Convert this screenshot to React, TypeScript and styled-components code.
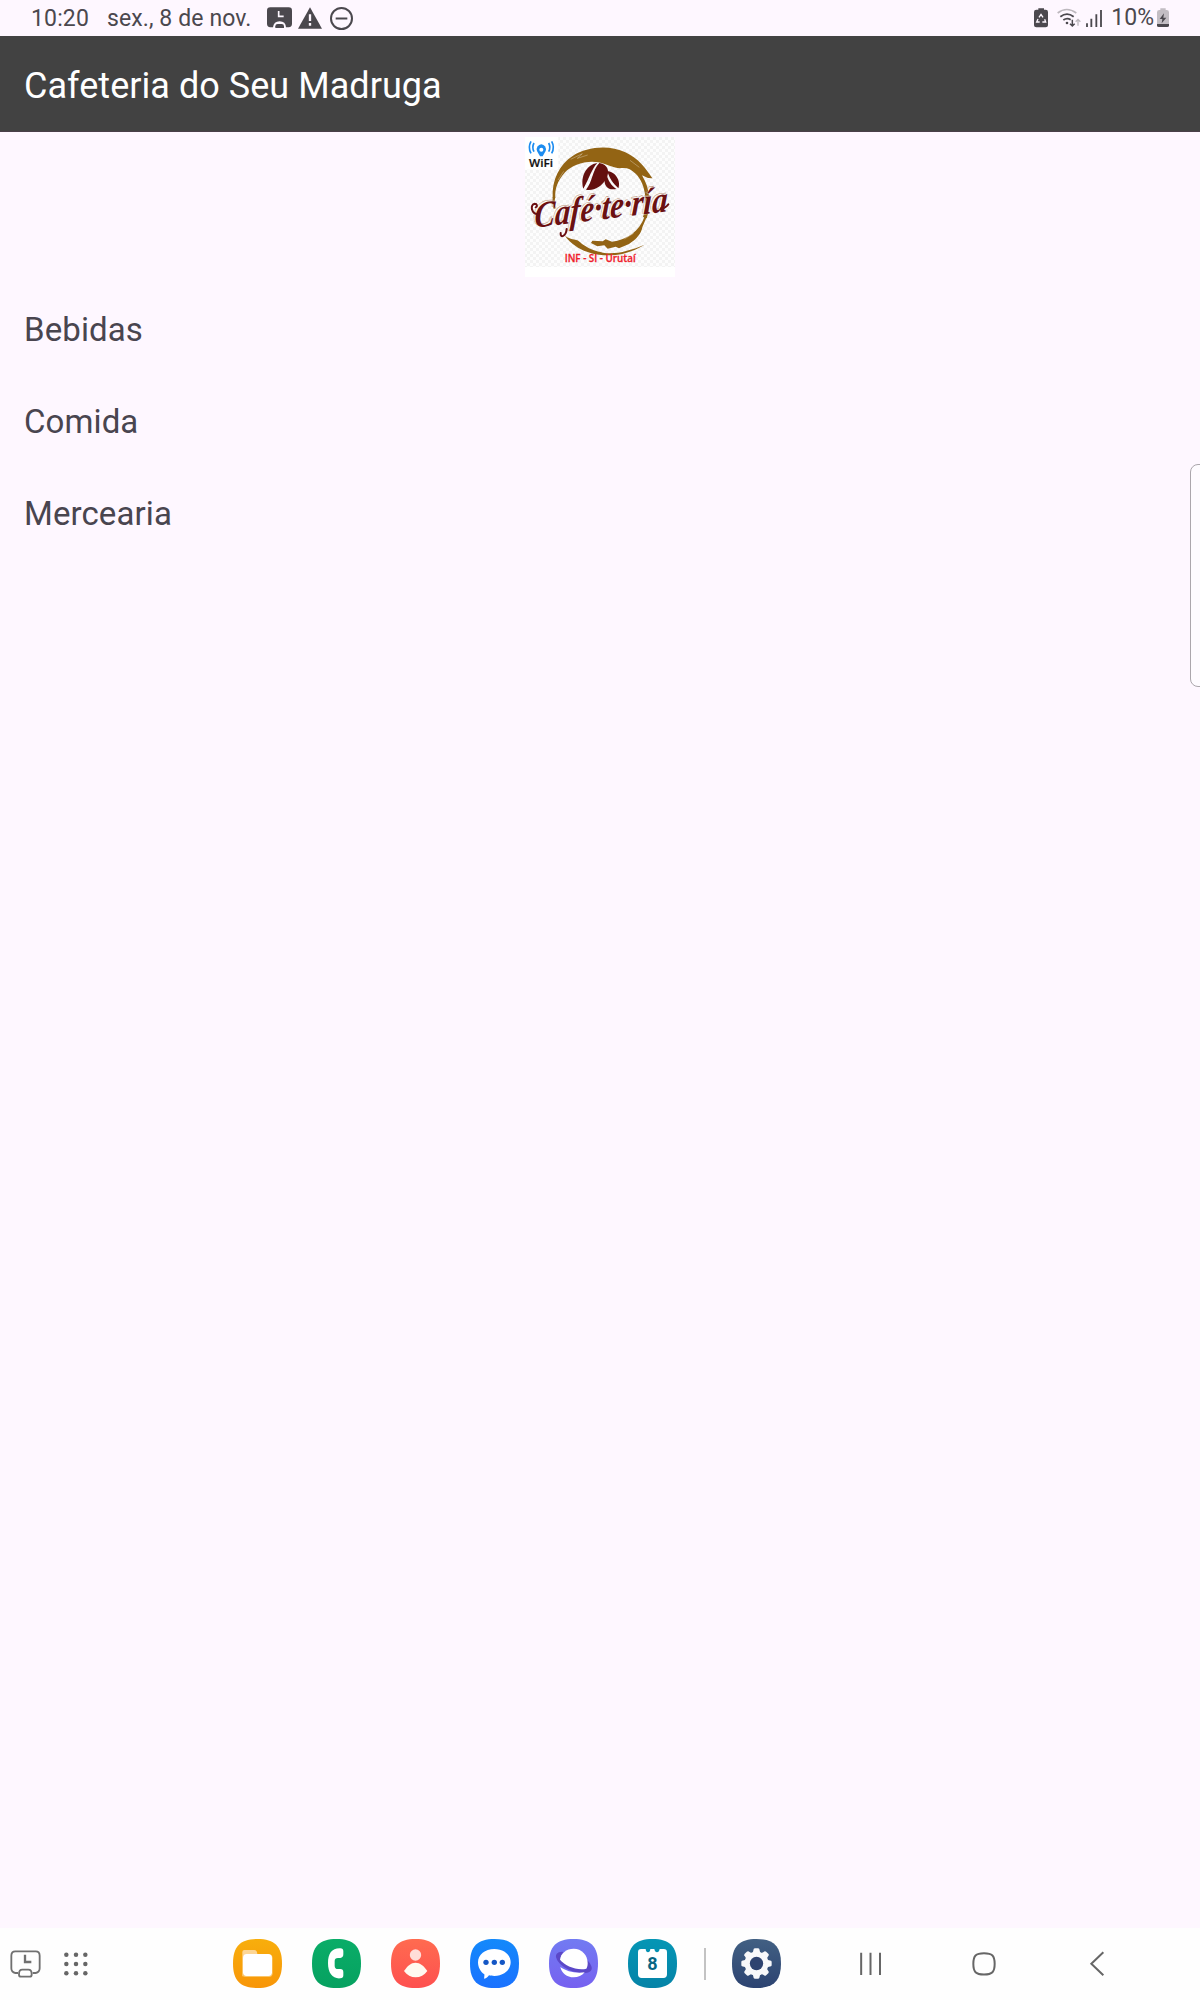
import React from "react";
import styled, { createGlobalStyle } from "styled-components";

const GlobalStyle = createGlobalStyle`
  *, *::before, *::after { box-sizing: border-box; }
  body { margin: 0; background: #fef7ff; }
  svg { display: block; flex: none; overflow: visible; }
`;

const Screen = styled.div`
  position: relative;
  display: flex;
  flex-direction: column;
  width: 1200px;
  height: 2000px;
  overflow: hidden;
  background: #fef7ff;
  font-family: Roboto, "Liberation Sans", sans-serif;
  color: #49454f;
`;

const StatusBar = styled.header`
  display: flex;
  justify-content: space-between;
  height: 36px;
  padding: 0 31px 0 31px;
  color: #4b484e;
`;

const StatusGroup = styled.div`
  display: flex;
  align-items: center;
`;

const StatusText = styled.span<{ $width: number; $spacing?: number }>`
  width: ${(p) => p.$width}px;
  padding-top: 1px;
  font-size: 23px;
  line-height: 36px;
  letter-spacing: ${(p) => p.$spacing ?? 0}px;
  white-space: nowrap;
`;

const Glyph = styled.svg<{ $gap?: number }>`
  margin-left: ${(p) => p.$gap ?? 0}px;
`;

const AppBar = styled.div`
  display: flex;
  align-items: center;
  height: 96px;
  padding: 4px 24px 0;
  background: #424242;
  border-bottom: 1px solid #4a3f49;
`;

const Title = styled.h1`
  margin: 0;
  font-size: 36px;
  font-weight: 400;
  line-height: 48px;
  letter-spacing: 0.04px;
  color: #fff;
`;

const Content = styled.main`
  display: flex;
  flex: 1;
  flex-direction: column;
  padding-top: 5px;
`;

const LogoFrame = styled.div`
  align-self: center;
  width: 150px;
  height: 140px;
  background: #fff;
`;

const Menu = styled.ul`
  display: flex;
  flex-direction: column;
  margin: 6px 0 0;
  padding: 0;
  list-style: none;
`;

const MenuItem = styled.li`
  display: flex;
  align-items: center;
  height: 92px;
  padding: 0 24px;
  font-size: 33px;
  letter-spacing: 0.1px;
`;

const EdgeHandle = styled.div`
  position: absolute;
  top: 464px;
  right: -2px;
  width: 12px;
  height: 223px;
  border: 1.5px solid #aba6ac;
  border-radius: 8px 0 0 8px;
  background: #fefbff;
`;

const Dock = styled.footer`
  display: flex;
  align-items: center;
  height: 72px;
  padding: 0 0 1px 10px;
  background: #fefefe;
`;

const Tools = styled.div`
  display: flex;
  align-items: center;
  gap: 23px;
  width: 223px;
`;

const Apps = styled.div`
  display: flex;
  align-items: center;
  gap: 30px;
`;

const Divider = styled.span`
  width: 2px;
  height: 32px;
  margin: 0 26px 0 27px;
  background: #c3c3c3;
`;

const NavKeys = styled.nav`
  display: flex;
  align-items: center;
  margin-left: 79px;
`;

const SQUIRCLE =
  "M73.5 0C125 0 147 22 147 73.5S125 147 73.5 147 0 125 0 73.5 22 0 73.5 0Z";

type AppIconProps = { id: string; from: string; to: string; children: React.ReactNode };

const AppIcon = ({ id, from, to, children }: AppIconProps) => (
  <svg width="49" height="49" viewBox="0 0 147 147">
    <defs>
      <linearGradient id={id} x1="0" y1="0" x2="0" y2="1">
        <stop offset="0" stopColor={from} />
        <stop offset="1" stopColor={to} />
      </linearGradient>
    </defs>
    <path d={SQUIRCLE} fill={`url(#${id})`} />
    {children}
  </svg>
);

const CafeLogo = () => (
  <svg width="150" height="140" viewBox="30 36 450 420">
    <defs>
      <pattern id="checks" width="18" height="18" patternUnits="userSpaceOnUse">
        <rect width="18" height="18" fill="#fdfdfd" />
        <path d="M0 0h9v9H0zM9 9h9v9H9z" fill="#f3f3f3" />
      </pattern>
    </defs>
    <rect x="30" y="36" width="450" height="390" fill="url(#checks)" />
    <rect x="30" y="36" width="100" height="98" fill="#fff" />

    <g fill="none" stroke="#1c8cf0" strokeWidth="5">
      <path d="M48 49q-10 18 0 36M57 54q-7 13 0 26M110 49q10 18 0 36M101 54q7 13 0 26" />
    </g>
    <path d="M79 58a15 15 0 0 1 13 20L83 94h-8L66 78a15 15 0 0 1 13-20Z" fill="#1c8cf0" />
    <circle cx="79" cy="74" r="6" fill="#fff" />
    <text x="42" y="126" textLength="72" lengthAdjust="spacingAndGlyphs" fontFamily="Open Sans, sans-serif" fontWeight="600" fontSize="31" fill="#111" stroke="#111" strokeWidth=".6">WiFi</text>

    <g fill="#936414">
      <path d="M113 218C110 165 133 118 174 92C215 65 283 58 331 82C370 99 394 133 412 160L399 159L381 151C394 173 401 194 402 215Q405 250 395 280L384 276Q394 247 391 216C388 184 378 162 362 146C349 133 337 128 322 129C299 132 281 119 250 112C215 105 171 119 149 143C128 166 119 192 121 218Z" />
      <path d="M113 216C112 229 113 240 116 252L122 250C118 238 118 228 121 216Z" />
      <path d="M144 324C152 341 171 341 183 345C194 347 196 355 206 360C226 374 243 378 264 383C303 389 345 377 389 359C351 382 314 392 276 391C236 391 176 376 144 324Z" />
      <path d="M388 276C374 318 336 345 291 350L272 343L263 349L232 347L228 354L247 364L268 361L278 371L302 365L312 370L342 357C365 343 379 325 382 307L395 276Z" />
    </g>
    <path d="M167 103l35-17-15 14 31-10M129 165l17-26M345 106l28 21M328 342l28-17" fill="none" stroke="#fff" strokeWidth="1.5" opacity=".6" />

    <g fill="#64100f">
      <path d="M205 191C195 155 214 119 247 114C230 132 226 153 205 191Z" />
      <path d="M213 194C233 171 231 136 253 114C279 118 286 139 273 163C260 185 235 199 213 194Z" />
      <path d="M277 139C301 139 319 169 310 190C302 180 286 170 277 139Z" />
      <path d="M274 143C278 166 288 180 304 192C282 197 258 184 274 143Z" />
    </g>

    <g
      transform="translate(57 308) rotate(-7) skewX(-10)"
      fontFamily="Liberation Serif, serif"
      fontStyle="italic"
      fontWeight="700"
      fontSize="110"
    >
      <text x="-5" y="-4" textLength="402" lengthAdjust="spacingAndGlyphs" fill="none" stroke="#b98f77" strokeWidth="1.5">Café·te·ría</text>
      <text x="0" y="0" textLength="402" lengthAdjust="spacingAndGlyphs" fill="#6b1012" stroke="#fff" strokeWidth="1.5" paintOrder="stroke">Café·te·ría</text>
    </g>
    <path d="M72 268C47 268 45 238 59 236C67 236 68 245 62 247M137 324C135 341 153 334 155 312M438 250Q448 252 460 238" fill="none" stroke="#6b1012" strokeWidth="6" strokeLinecap="round" />
    <text x="149" y="411" textLength="213" lengthAdjust="spacingAndGlyphs" fontFamily="Open Sans, sans-serif" fontWeight="600" fontSize="30" fill="#f0202c" stroke="#f0202c" strokeWidth=".8">INF - SI - Urutaí</text>
  </svg>
);

const StatusLeft = () => (
  <StatusGroup>
    <StatusText $width={76} $spacing={0.15}>10:20</StatusText>
    <StatusText $width={160} $spacing={0.1}>sex., 8 de nov.</StatusText>
    <Glyph width="25" height="22" viewBox="801 23 75 66">
      <path d="M811 24H866Q876 24 876 34V73Q876 83 866 84H858Q857 66 839 66T819 84H811Q801 83 801 73V34Q801 24 811 24Z" fill="#4b484e" />
      <path d="M836 35V51H851" fill="none" stroke="#fef7ff" strokeWidth="5" />
      <path d="M826 86V81Q826 74 833 74H845Q852 74 852 81V86Z" fill="#4b484e" />
    </Glyph>
    <Glyph $gap={6} width="24" height="22" viewBox="895 22 72 66">
      <path d="M931 23L967 87H895Z" fill="#4b484e" />
      <path d="M931 44V64M931 70V78" stroke="#fef7ff" strokeWidth="7" />
    </Glyph>
    <Glyph $gap={8} width="23" height="23" viewBox="989 21 69 69">
      <circle cx="1023.5" cy="55.5" r="31.5" fill="none" stroke="#4b484e" strokeWidth="6" />
      <path d="M1006 55.5H1041" stroke="#4b484e" strokeWidth="6" />
    </Glyph>
  </StatusGroup>
);

const StatusRight = () => (
  <StatusGroup>
    <Glyph width="14" height="20" viewBox="102 23 42 60">
      <path d="M115 28V24H132V28H137Q144 28 144 35V75Q144 81 137 81H109Q102 81 102 75V35Q102 28 109 28Z" fill="#4b484e" />
      <path d="M117 51L123 42L129 51M134 57L137 65H127M119 65H110L114 56" fill="none" stroke="#fef7ff" strokeWidth="4" />
    </Glyph>
    <Glyph $gap={9} width="24" height="20" viewBox="171 23 72 60">
      <path d="M173 38Q200 17 229 38" fill="none" stroke="#bdb8be" strokeWidth="5" />
      <path d="M181 49Q201 34 221 49M190 59Q201 51 212 58" fill="none" stroke="#4b484e" strokeWidth="5.5" />
      <circle cx="201" cy="68" r="4" fill="#4b484e" />
      <path d="M217 58V76M210 70L217 77L224 70" fill="none" stroke="#4b484e" strokeWidth="4.5" />
      <path d="M234 76V57M227 64L234 57L241 64" fill="none" stroke="#bdb8be" strokeWidth="4" />
    </Glyph>
    <Glyph $gap={5} width="16" height="20" viewBox="258 21 48 60">
      <path d="M261 67V78M274 53V78M289 40V78M303 27V78" stroke="#4b484e" strokeWidth="5.5" />
    </Glyph>
    <Glyph as="span" $gap={9}>
      <StatusText $width={45}>10%</StatusText>
    </Glyph>
    <Glyph $gap={3} width="12" height="20" viewBox="471 20 36 60">
      <path d="M481 26V21H497V26H500Q507 26 507 33V76H471V33Q471 26 478 26Z" fill="#c2bdc3" />
      <path d="M471 68H507V72Q507 77 502 77H476Q471 77 471 72Z" fill="#4b484e" />
      <path d="M492 36L479 53H487L485 66L499 49H490Z" fill="#4b484e" />
    </Glyph>
  </StatusGroup>
);

const GEAR_TEETH = [0, 45, 90, 135, 180, 225, 270, 315];

const DockBar = () => (
  <Dock>
    <Tools>
      <svg width="31" height="29" viewBox="30 118 93 87">
        <path d="M54 190H46Q34 188 34 176V138Q34 125 46 125H107Q119 125 119 138V176Q119 188 107 190H98" fill="none" stroke="#707070" strokeWidth="5.5" />
        <path d="M75 135V157H94" fill="none" stroke="#707070" strokeWidth="7" />
        <path d="M57 193Q57 180 67 180H85Q95 180 95 193V195Q95 201 89 201H63Q57 201 57 195Z" fill="none" stroke="#707070" strokeWidth="5.5" />
      </svg>
      <svg width="24" height="24" viewBox="192 126 72 72">
        {[134, 162, 190].map((cy) =>
          [199, 228, 256].map((cx) => <circle key={`${cx}-${cy}`} cx={cx} cy={cy} r="6.7" fill="#666" />)
        )}
      </svg>
    </Tools>
    <Apps>
      <AppIcon id="files" from="#f8ae0c" to="#f89608">
        <path d="M28 112V39Q28 33 34 33H64Q72 33 73 45L100 60V112Z" fill="#fdd695" />
        <rect x="28" y="47" width="91" height="67" rx="11" fill="#fbc568" />
        <rect x="30" y="45" width="87" height="66" rx="11" fill="#fff" />
      </AppIcon>
      <AppIcon id="phone" from="#0aad68" to="#06a160">
        <path d="M85 28C60 27 48 43 48 73S62 120 85 118Q94 118 94 109V100Q94 90 85 90H78Q68 90 68 80V66Q68 57 78 57H85Q94 56 94 46V37Q94 28 85 28Z" fill="#fff" />
      </AppIcon>
      <AppIcon id="contacts" from="#ff6b50" to="#fe504f">
        <circle cx="73.5" cy="48" r="17" fill="#ffddd8" />
        <path d="M39 96C50 80 60 71 73.5 71S98 80 109 96C100 109 88 115 74 115S48 109 39 96Z" fill="#fff9ef" />
      </AppIcon>
      <AppIcon id="messages" from="#1389fb" to="#1a72ff">
        <path d="M73 30C101 30 122 47 122 70S101 111 73 111C67 111 61 110 57 109C53 115 49 118 43 119C41 118 44 113 43 106C31 98 24 85 24 70C24 47 45 30 73 30Z" fill="#fff" />
        <circle cx="48" cy="70" r="8" fill="#1557c5" />
        <circle cx="73" cy="70" r="8" fill="#1557c5" />
        <circle cx="97" cy="70" r="8" fill="#1557c5" />
      </AppIcon>
      <AppIcon id="browser" from="#727bf2" to="#7661f0">
        <path d="M41 38C25 37 18 47 22 57C30 82 74 105 108 102C126 101 133 91 125 77C122 71 118 67 114 63L100 80L50 60Z" fill="#5b48c8" />
        <path d="M33 62C35 43 52 29 74 29C98 29 116 48 116 72C116 79 115 84 112 89C84 96 47 80 33 62Z" fill="#fff" />
        <path d="M34 84C52 97 79 104 107 100C99 110 87 115 74 115C54 115 38 102 34 84Z" fill="#fff" />
      </AppIcon>
      <AppIcon id="calendar" from="#0596b5" to="#0583a7">
        <path d="M39 30H53Q54 40 60 40T67 30H79Q81 40 87 40T95 30H107Q117 30 117 40V106Q117 117 106 117H41Q30 117 30 106V40Q30 30 39 30Z" fill="#fff" />
        <text x="73.5" y="93" textAnchor="middle" fontFamily="Roboto, sans-serif" fontWeight="700" fontSize="54" fill="#086684">8</text>
      </AppIcon>
    </Apps>
    <Divider />
    <AppIcon id="settings" from="#426083" to="#2c4371">
      <g fill="#f8f8fa">
        <circle cx="73.5" cy="73.5" r="36" />
        {GEAR_TEETH.map((a) => (
          <path key={a} d="M62 42L65 30Q66 28 69 28H78Q81 28 82 30L85 42Z" transform={`rotate(${a} 73.5 73.5)`} />
        ))}
      </g>
      <circle cx="73.5" cy="73.5" r="20" fill="#2e426f" />
    </AppIcon>
    <NavKeys>
      <Glyph width="21" height="24" viewBox="540 95 63 72">
        <path d="M543.5 97V164M571.5 97V164M600 97V164" stroke="#666" strokeWidth="6" />
      </Glyph>
      <Glyph $gap={91} width="24" height="24" viewBox="215 95 72 72">
        <path d="M251 98.5C276 98.5 283 106 283 130.5S276 162.500 251 162.500 219 155 219 130.500 226 98.500 251 98.500Z" fill="none" stroke="#666" strokeWidth="6" />
      </Glyph>
      <Glyph $gap={94} width="14" height="24" viewBox="569 95 42 72">
        <path d="M609 96L573 130.500L609 165" fill="none" stroke="#666" strokeWidth="6" />
      </Glyph>
    </NavKeys>
  </Dock>
);

const CATEGORIES = ["Bebidas", "Comida", "Mercearia"];

export default function App() {
  return (
    <Screen>
      <GlobalStyle />
      <StatusBar>
        <StatusLeft />
        <StatusRight />
      </StatusBar>
      <AppBar>
        <Title>Cafeteria do Seu Madruga</Title>
      </AppBar>
      <Content>
        <LogoFrame>
          <CafeLogo />
        </LogoFrame>
        <Menu>
          {CATEGORIES.map((name) => (
            <MenuItem key={name}>{name}</MenuItem>
          ))}
        </Menu>
      </Content>
      <EdgeHandle />
      <DockBar />
    </Screen>
  );
}
